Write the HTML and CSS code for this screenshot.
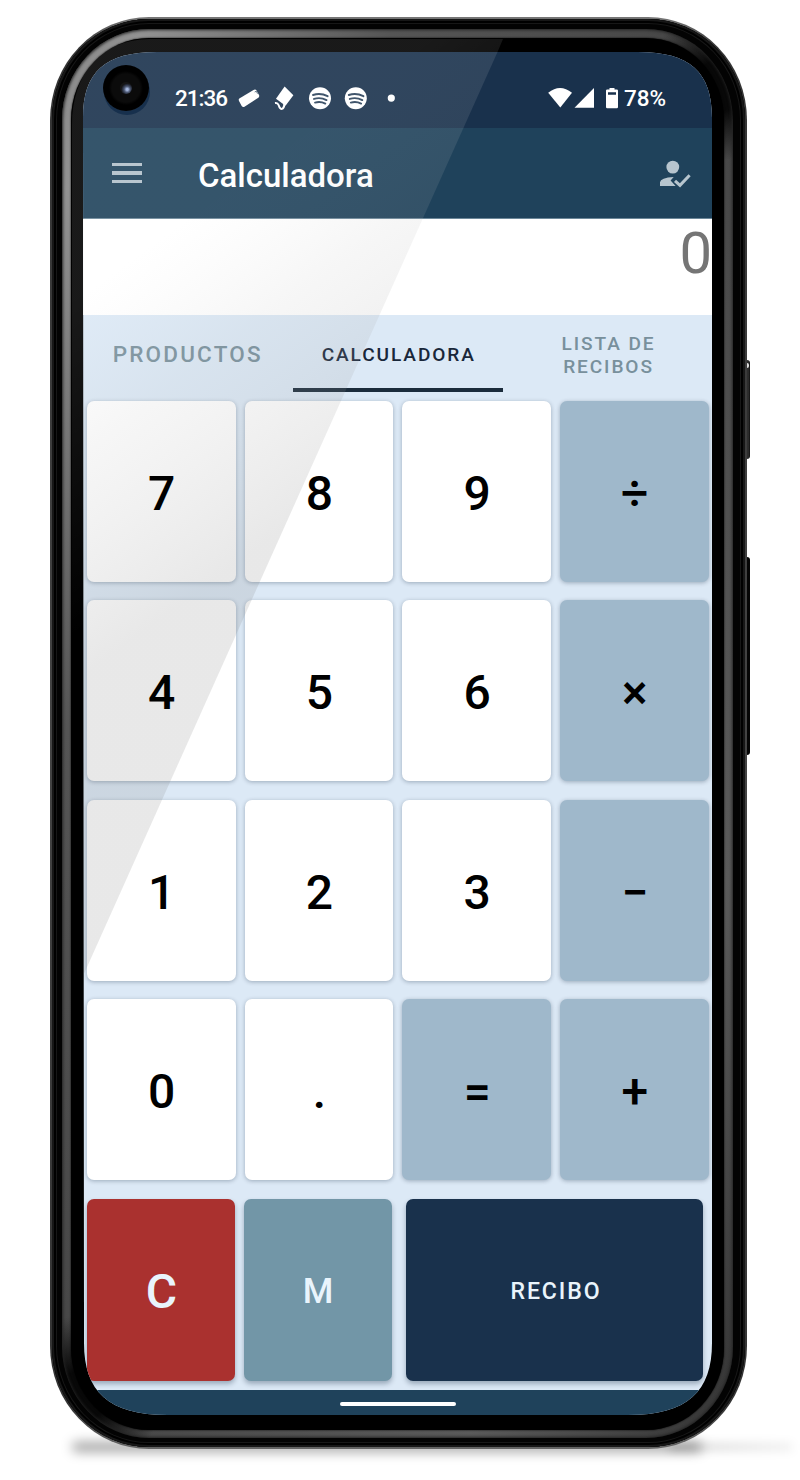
FILE: index.html
```html
<!DOCTYPE html>
<html lang="es">
<head>
<meta charset="utf-8">
<title>Calculadora</title>
<link rel="stylesheet" href="styles.css">
</head>
<body>
<main class="stage">
  <div class="ground-shadow"></div>
  <div class="ground-shadow-side"></div>
  <div class="side-button power"></div>
  <div class="side-button volume"></div>
  <div class="device">
    <div class="rim">
      <div class="highlight">
        <div class="bezel">
          <div class="screen">
            <header class="status">
              <div class="camera"><i class="lens"></i></div>
              <span class="clock">21:36</span>
              <svg class="notices" width="170" height="28" viewBox="236 83.500 170 28" fill="#fff">
                <path d="M239.300 98L253.500 89.500Q255.500 88.500 256.500 90L259 94.500Q259.700 96.300 258.300 97.300L244.500 106.200Q242.700 107 241.700 105.500L239 100.500Q238.300 98.700 239.300 98Z"/>
                <path d="M254.700 91.500l1.600-.8 1.200 2.500" fill="none" stroke="#2f465f" stroke-width=".8"/>
                <path d="M284.600 86L293.400 94.700L285.500 105.200L276 98.200Z"/>
                <path d="M275 102.500Q277.600 102 278.600 104.500Q280 109.300 282.600 108.200Q284.400 107 284.300 103" fill="none" stroke="#fff" stroke-width="2"/>
                <g id="wave"><circle cx="320" cy="97.800" r="11"/><path d="M313 94.500Q320.500 92 327.600 95.700M314 98.400Q320.500 96.300 326.500 99.600M315 102.100Q320.500 100.600 325.300 103.100" fill="none" stroke="#2c435c" stroke-width="1.900" stroke-linecap="round"/></g>
                <use href="#wave" x="35.800"/>
                <circle cx="391.300" cy="97.600" r="3.600"/>
              </svg>
              <svg class="signal" width="74" height="24" viewBox="546 85.500 74 24" fill="#fff">
                <path d="M547.200 92.300Q559 82.500 571 92.300L559.300 107Z"/>
                <path d="M593 87.500V107.300H573.500Z"/>
                <path fill-rule="evenodd" d="M608.500 87.500h5v1.500h2.300q1.200 0 1.200 1.200v16.300q0 1.200-1.200 1.200h-9.600q-1.200 0-1.200-1.200V90.200q0-1.200 1.200-1.200h2.300ZM607 91.700v2.500h8V91.700Z"/>
              </svg>
              <span class="battery">78%</span>
            </header>
            <div class="appbar">
              <div class="menu"><i></i><i></i><i></i></div>
              <h1>Calculadora</h1>
              <svg class="user" width="34" height="30" viewBox="659 159 34 30" fill="#b7c5ce">
                <circle cx="672.800" cy="167.100" r="6.400"/>
                <path d="M660 186V182.300Q660.500 177.500 673.700 176.900L670.600 180.600L675.600 186Z"/>
                <path d="M675 180.800L680 185.400L689.600 175.200" fill="none" stroke="#b7c5ce" stroke-width="3"/>
              </svg>
            </div>
            <div class="display"><span>0</span></div>
            <nav class="tabs">
              <span class="tab wide">PRODUCTOS</span>
              <span class="tab active">CALCULADORA</span>
              <span class="tab">LISTA DE<br>RECIBOS</span>
            </nav>
            <section class="keys">
              <button><b>7</b></button><button><b>8</b></button><button><b>9</b></button><button class="op"><b>÷</b></button>
              <button><b>4</b></button><button><b>5</b></button><button><b>6</b></button><button class="op"><b>×</b></button>
              <button><b>1</b></button><button><b>2</b></button><button><b>3</b></button><button class="op"><b>−</b></button>
              <button><b>0</b></button><button><b>.</b></button><button class="op"><b>=</b></button><button class="op"><b>+</b></button>
            </section>
            <section class="actions">
              <button class="clear">C</button><button class="memory">M</button><button class="receipt">RECIBO</button>
            </section>
            <footer class="navbar"><i></i></footer>
            <svg class="glare" width="629" height="1363" viewBox="83 52 629 1363">
              <defs>
                <linearGradient id="sheen" gradientUnits="userSpaceOnUse" x1="169" y1="232" x2="350" y2="480">
                  <stop offset="0" stop-color="#fff" stop-opacity=".1"/>
                  <stop offset=".4" stop-color="#bdbdbd" stop-opacity=".13"/>
                  <stop offset="1" stop-color="#808080" stop-opacity=".18"/>
                </linearGradient>
              </defs>
              <path fill="url(#sheen)" d="M83 976V52H497.500Z"/>
            </svg>
          </div>
        </div>
      </div>
    </div>
  </div>
  <svg class="bezel-glare" width="800" height="1480" viewBox="0 0 800 1480">
    <defs>
      <linearGradient id="edge" gradientUnits="userSpaceOnUse" x1="170" y1="232" x2="330" y2="452">
        <stop offset="0" stop-color="#fff" stop-opacity=".1"/>
        <stop offset="1" stop-color="#fff" stop-opacity="0"/>
      </linearGradient>
    </defs>
    <path fill="url(#edge)" fill-rule="evenodd" d="M72 900V125C72 75 100 39 150 39H503L497.500 52H157C105 52 83 72 83 118V900Z"/>
  </svg>
</main>
</body>
</html>
```
FILE: styles.css
```css
* { box-sizing: border-box; }
body { margin: 0; background: #fff; font-family: Roboto, "Liberation Sans", sans-serif; }
.stage { position: relative; width: 800px; height: 1480px; overflow: hidden; padding: 17px 0 0 50px; }
.device {
  position: relative; width: 697px; height: 1432px; padding: 2px;
  border-radius: 99px / 103px;
  background: linear-gradient(#777, #333 2%, #444 50%, #333 97%, #666);
}
.rim {
  height: 100%; padding: 10px 12px 9px 10px; border-radius: 97px / 101px; background: #030303;
  box-shadow: inset 0 0 0 2px #171717, inset 0 0 0 4px #000, inset 0 0 0 5px #171717;
}
.highlight {
  height: 100%; padding: 9px 9px 8px; border-radius: 87px / 91px;
  background:
    radial-gradient(circle at 98% 4%, #080808 0 25px, transparent 75px),
    radial-gradient(circle at 3% 97%, #080808 0 25px, transparent 80px),
    linear-gradient(115deg, #888 0, #929292 6%, #555 25%, #454545 50%, #5a5a5a 80%, #333);
  box-shadow: inset 0 0 3px 1px #222;
}
.bezel { height: 100%; padding: 14px 12px 15px; border-radius: 78px / 82px; background: #000; box-shadow: 0 0 2px #000; }
.screen {
  position: relative; width: 629px; height: 1363px; overflow: hidden; display: flex; flex-direction: column; background: #dce9f6;
  clip-path: path("M0 66C0 20 22 0 74 0H555C607 0 629 20 629 66V1291C629 1339 605 1363 545 1363H85C25 1363 1 1339 1 1291Z");
}
.status { flex: none; height: 76px; display: flex; align-items: center; color: #fff; background: #19314c; padding: 15px 45px 0 20px; font-size: 22.500px; font-weight: 500; }
.camera { position: relative; z-index: 3; width: 46px; height: 46px; margin: -19px 26px 0 0; border-radius: 50%; background: radial-gradient(circle, #0b0b0b 0 14px, #000 17px); box-shadow: 1px 4px 0 #17304d; display: grid; place-items: center; flex: none; }
.lens { width: 12px; height: 12px; border-radius: 50%; background: radial-gradient(circle at 60% 62%, #a4b6dd 0 1px, #4d5973 3px, #222735 5px, #151515 6px); }
.clock { width: 61px; letter-spacing: -1px; }
.signal { margin-left: auto; }
.battery { width: 43px; margin-left: 3px; white-space: nowrap; }
.appbar { flex: none; height: 90.500px; display: flex; align-items: center; background: #1f425b; border-bottom: 1px solid #6c8799; padding: 0 19px 0 29px; color: #fff; }
.menu { display: flex; flex-direction: column; gap: 5px; width: 30px; margin-right: 56px; }
.menu i { height: 3.500px; background: #b1c0ca; }
h1 { margin: 6px 0 0; font-size: 33px; line-height: 40px; font-weight: 500; }
.user { margin: 2px 0 0 auto; }
.display { flex: none; height: 96.500px; background: #fff; color: #757575; text-align: right; font-size: 58px; line-height: 68px; }
.tabs { flex: none; height: 77px; display: grid; grid-template-columns: 209.500px 210.500px 1fr; }
.tab { display: grid; place-content: center; text-align: center; color: #78909c; font-size: 19.100px; line-height: 23px; font-weight: 500; letter-spacing: 1.900px; border-bottom: 4px solid transparent; padding: 6px 0 0 2px; }
.wide { font-size: 22.500px; letter-spacing: 2.200px; padding: 5px 0 0 0; }
.active { color: #19273a; border-color: #1b2c3c; }
.keys { flex: none; display: grid; grid-template-columns: repeat(4, 148.500px); grid-auto-rows: 180.800px; gap: 18.600px 9.200px; padding: 9px 0 0 4px; }
button { border: 0; padding: 0; border-radius: 7px; background: #fff; color: #000; font: 500 48px Roboto, sans-serif; box-shadow: 0 1px 4px rgba(0, 25, 50, .3); display: grid; place-items: center; }
.keys button { padding: 4px 0 0 1px; }
.keys b { position: relative; z-index: 3; font-weight: 500; }
.op { background: #9fb8cb; }
.actions { flex: none; display: flex; height: 182px; margin: 19px 0 9px 4px; }
.actions button { width: 148px; color: #e9f4fc; box-shadow: 0 3px 5px rgba(0, 25, 50, .3); }
.actions .clear { background: #aa312f; margin-right: 9px; padding: 4px 0 0 1px; }
.actions .memory { background: #7296a7; font-size: 35px; margin-right: 14px; padding-top: 4px; }
.actions .receipt { width: 297px; background: #19314c; font-size: 23.100px; letter-spacing: 1.900px; padding: 3px 0 0 3px; }
.navbar { flex: 1; background: #1f425b; display: flex; justify-content: center; padding-top: 12px; }
.navbar i { width: 116px; height: 4px; border-radius: 2px; background: #fff; }
.glare { position: absolute; inset: 0; z-index: 1; pointer-events: none; }
.bezel-glare { position: absolute; inset: 0; pointer-events: none; }
.side-button { position: absolute; left: 742px; width: 8px; border-radius: 3px; background: linear-gradient(90deg, #111 40%, #333 75%, #111); }
.power { top: 360px; height: 99px; }
.power::before { content: ""; position: absolute; left: 3px; top: 3px; width: 4px; height: 5px; border-radius: 2px; background: #ddd; }
.volume { top: 557px; height: 198px; background: #050505; }
.ground-shadow { position: absolute; left: 72px; top: 1442px; width: 630px; height: 10px; border-radius: 50px; background: rgba(0, 0, 0, .36); filter: blur(6px); }
.ground-shadow-side { position: absolute; left: 670px; top: 1443px; width: 122px; height: 8px; background: linear-gradient(90deg, rgba(0, 0, 0, .16), rgba(0, 0, 0, .06)); filter: blur(5px); }
```
